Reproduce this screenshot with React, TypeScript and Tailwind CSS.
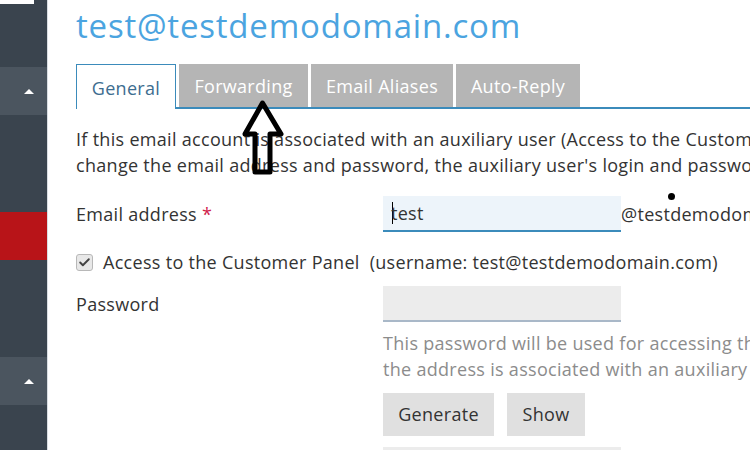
import { Check } from 'lucide-react'

const font = { fontFamily: '"Open Sans", "Noto Sans", sans-serif' }

function SideBlock({ kind }: { kind: 'light' | 'red' }) {
  if (kind === 'light') {
    return (
      <div className="h-[48px] bg-[#4b555f] flex items-center justify-end pr-[13px]">
        <div className="w-0 h-0 border-l-[5px] border-r-[5px] border-b-[5px] border-l-transparent border-r-transparent border-b-white" />
      </div>
    )
  }
  return <div className="h-[48px] bg-[#b81418]" />
}

export default function App() {
  return (
    <div className="w-[750px] h-[450px] overflow-hidden flex bg-white relative text-[#333]" style={font}>
      {/* sidebar */}
      <div className="w-[48px] shrink-0 bg-[#3a444e] border-r border-[#d8dde2] flex flex-col">
        <div className="w-[34px] h-[4px] bg-white" />
        <div className="h-[63px]" />
        <SideBlock kind="light" />
        <div className="h-[97px]" />
        <SideBlock kind="red" />
        <div className="h-[97px]" />
        <SideBlock kind="light" />
      </div>

      {/* content */}
      <div className="flex-1 min-w-0 pl-[28px] pt-[4px]">
        <h1 className="h-[44px] text-[33px] leading-[44px] tracking-[0.8px] text-[#4ba4e0] whitespace-nowrap">
          test@testdemodomain.com
        </h1>

        {/* tabs */}
        <div className="mt-[16px] flex items-end gap-[3px] border-b-2 border-[#3b8bbb] w-[700px] h-[45px] text-[18px] tracking-[0.3px]">
          <div className="h-[45px] w-[100px] -mb-[2px] pt-[2px] bg-white border border-b-0 border-[#3b8bbb] flex items-center justify-center text-[#3d6d8f]">
            General
          </div>
          <div className="h-[43px] w-[129px] pt-[2px] bg-[#b5b5b5] flex items-center justify-center text-white">Forwarding</div>
          <div className="h-[43px] w-[142px] pt-[2px] bg-[#b5b5b5] flex items-center justify-center text-white">Email Aliases</div>
          <div className="h-[43px] w-[124px] pt-[2px] bg-[#b5b5b5] flex items-center justify-center text-white">Auto-Reply</div>
        </div>

        <div className="text-[18px] tracking-[0.3px]">
          <p className="mt-[17px] leading-[26px] whitespace-nowrap">
            If this email account is associated with an auxiliary user (Access to the Customer Panel checkbox is selected), then when you
            <br />
            change the email address and password, the auxiliary user's login and password will be changed as well.
          </p>

          {/* email */}
          <div className="mt-[18px] flex items-center h-[36px]">
            <div className="w-[307px] shrink-0">
              Email address <span className="text-[#d0214a]">*</span>
            </div>
            <div className="w-[238px] h-[36px] shrink-0 bg-[#edf4fa] border-b-2 border-[#3b8bbb] flex items-center pl-[9px]">
              <span className="inline-block w-px h-[22px] bg-black mr-[-2px]" />
              test
            </div>
            <div className="whitespace-nowrap">@testdemodomain.com</div>
          </div>

          {/* checkbox */}
          <div className="mt-[18px] flex items-center h-[24px] whitespace-nowrap">
            <div className="w-[17px] h-[17px] rounded-[3px] border border-[#b8b8b8] bg-[#e8e8e8] flex items-center justify-center">
              <Check className="w-[13px] h-[13px] text-[#444]" strokeWidth={3.5} />
            </div>
            <span className="ml-[10px]">Access to the Customer Panel</span>
            <span className="ml-[10px]">(username: test@testdemodomain.com)</span>
          </div>

          {/* password */}
          <div className="mt-[12px] flex items-center h-[36px]">
            <div className="w-[307px] shrink-0">Password</div>
            <div className="w-[238px] h-[36px] shrink-0 bg-[#ececec] border-b-2 border-[#a9b8c8]" />
          </div>
          <div className="ml-[307px] mt-[8px] leading-[26px] text-[#8c8c8c] whitespace-nowrap">
            This password will be used for accessing the Customer Panel if
            <br />
            the address is associated with an auxiliary user.
          </div>

          <div className="ml-[307px] mt-[11px] flex gap-[13px]">
            <button className="h-[43px] w-[111px] bg-[#e0e0e0] text-[#333] tracking-[0.3px]">Generate</button>
            <button className="h-[43px] w-[78px] bg-[#e0e0e0] text-[#333] tracking-[0.3px]">Show</button>
          </div>
          <div className="ml-[307px] mt-[11px] w-[238px] h-[36px] bg-[#ececec]" />
        </div>
      </div>

      {/* annotation overlays */}
      <svg className="absolute left-[240px] top-[95px]" width="50" height="85" viewBox="0 0 50 85">
        <polygon
          points="22.5,8 41,39 30,39 30,77 15,77 15,39 5,39"
          fill="none"
          stroke="black"
          strokeWidth="5"
          strokeLinejoin="round"
        />
      </svg>
      <div className="absolute left-[668px] top-[193px] w-[7px] h-[7px] rounded-full bg-black" />
    </div>
  )
}
